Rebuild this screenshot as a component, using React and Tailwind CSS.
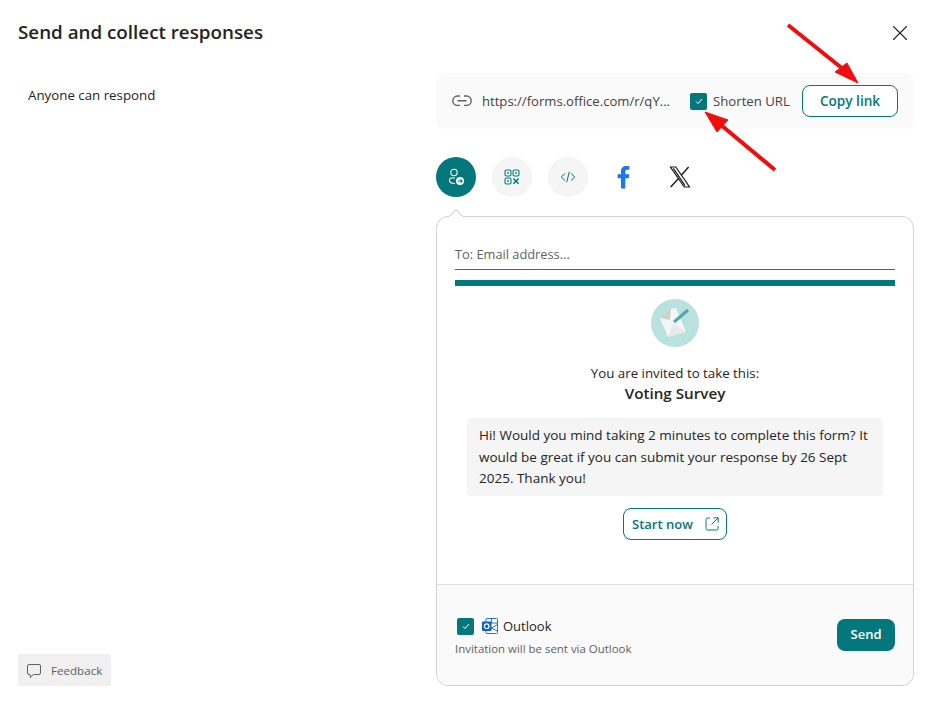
import React from "react";
import { X } from "lucide-react";

const Check = () => (
    <svg width="10" height="10" viewBox="0 0 10 10" fill="none" stroke="white" strokeWidth="1">
        <path d="M2 5.5 L4 7.5 L8 3" />
    </svg>
);

const CheckBox = () => (
    <span className="flex h-[17px] w-[17px] shrink-0 items-center justify-center rounded-[2px] bg-[#03787c]">
        <Check />
    </span>
);

const LinkIcon = () => (
    <svg width="20" height="12" viewBox="0 0 20 12" fill="none" stroke="#616161" strokeWidth="1.4">
        <path d="M8 1 H5.5 A4.7 4.7 0 0 0 5.5 10.4 H8 M12 1 H14.5 A4.7 4.7 0 0 1 14.5 10.4 H12 M5.5 5.7 H14.5" />
    </svg>
);

const ShareIcon = () => (
    <svg width="20" height="20" viewBox="0 0 20 20" fill="none" stroke="white" strokeWidth="1.1">
        <circle cx="8" cy="5.5" r="3.2" />
        <path d="M9 11 H5.5 A2.3 2.3 0 0 0 3.5 13.5 C3.5 15 5 16.5 9 16.5" />
        <circle cx="14" cy="14" r="4" fill="white" stroke="none" />
        <path d="M11.8 14 H16 M14.5 12.3 L16.2 14 L14.5 15.7" stroke="#03787c" />
    </svg>
);

const QrIcon = () => (
    <svg width="16" height="16" viewBox="0 0 16 16" fill="none" stroke="#03787c" strokeWidth="1.1">
        <rect x="1" y="1" width="6" height="6" rx="1.5" />
        <rect x="9" y="1" width="6" height="6" rx="1.5" />
        <rect x="1" y="9" width="6" height="6" rx="1.5" />
        <rect x="3.2" y="3.2" width="1.6" height="1.6" fill="#03787c" stroke="none" />
        <rect x="11.2" y="3.2" width="1.6" height="1.6" fill="#03787c" stroke="none" />
        <rect x="3.2" y="11.2" width="1.6" height="1.6" fill="#03787c" stroke="none" />
        <path d="M9.4 9.4 L14.6 14.8 M14.6 9.4 L9.4 14.8" strokeWidth="1.5" />
    </svg>
);

const CodeIcon = () => (
    <svg width="16" height="16" viewBox="0 0 16 16" fill="none" stroke="#03787c" strokeWidth="1">
        <path d="M5 4.5 L1.2 8 L5 11.5 M11 4.5 L14.8 8 L11 11.5 M9.3 2.8 L6.7 13.2" />
    </svg>
);

const FacebookIcon = () => (
    <svg width="14" height="24" viewBox="0 0 14 24">
        <path fill="#1877f2" d="M4 23.5 V13.2 H0.6 V9.2 H4 V6.4 C4 2.9 6.1 1 9.2 1 C10.7 1 12 1.1 12.4 1.2 V4.8 H10.3 C8.6 4.8 8.3 5.6 8.3 6.8 V9.2 H12.3 L11.8 13.2 H8.3 V23.5 Z" />
    </svg>
);

const XLogo = () => (
    <svg width="22" height="22" viewBox="0 0 22 22" fill="none" stroke="#1a1a1a">
        <path strokeWidth="1.2" d="M1.5 1 H6.8 L20.5 21 H15.2 Z" />
        <path strokeWidth="1.2" d="M4.4 2.4 L16 19.6" />
        <path strokeWidth="1.4" d="M19.6 1 L12.3 9.3 M9.6 12.4 L1.6 21" />
    </svg>
);

const FormLogo = () => (
    <svg width="48" height="48" viewBox="0 0 48 48">
        <circle cx="24" cy="24" r="24" fill="#b9e1e0" />
        <path fill="#f6f6f6" d="M9 19 L20 10 L25 9 L35 33 L17 38 Z" />
        <path fill="#cfcfcf" d="M9 19 L20 10 L19 21 Z" />
        <path fill="#e9e9e9" d="M17 38 L22 24 L35 33 Z" />
        <path d="M23 23 L37 11" stroke="#4fa9ac" strokeWidth="3" />
    </svg>
);

const OutlookIcon = () => (
    <svg width="16" height="16" viewBox="0 0 16 16">
        <rect x="4" y="0.5" width="11.5" height="15" rx="1" fill="white" stroke="#1a73e0" />
        <path d="M4 5 H15.5 M9.5 0.5 V5" stroke="#1a73e0" />
        <path d="M7 9 L15.5 13 M15.5 6.5 L8 11" stroke="#1a73e0" fill="none" />
        <rect x="0" y="3.5" width="9.5" height="9.5" rx="1" fill="#0f62c9" />
        <circle cx="4.7" cy="8.2" r="2.3" fill="none" stroke="white" strokeWidth="1.2" />
    </svg>
);

const OpenIcon = () => (
    <svg width="14" height="14" viewBox="0 0 14 14" fill="none" stroke="#03787c" strokeWidth="1">
        <path d="M5 1 H2.5 A1.5 1.5 0 0 0 1 2.5 V11.5 A1.5 1.5 0 0 0 2.5 13 H11.5 A1.5 1.5 0 0 0 13 11.5 V9" />
        <path d="M8.5 0.8 H13.2 V5.5 M13 1 L6.5 7.5" />
    </svg>
);

const FeedbackIcon = () => (
    <svg width="16" height="16" viewBox="0 0 16 16" fill="none" stroke="#616161" strokeWidth="1">
        <path d="M3 1.5 H13 A1.5 1.5 0 0 1 14.5 3 V10 A1.5 1.5 0 0 1 13 11.5 H7.5 L4.2 14.5 V11.5 H3 A1.5 1.5 0 0 1 1.5 10 V3 A1.5 1.5 0 0 1 3 1.5 Z" />
    </svg>
);

// red annotation arrows drawn over the screenshot
const Arrows = () => (
    <svg className="absolute left-0 top-0 pointer-events-none" width="931" height="701" viewBox="0 0 931 701">
        <g fill="#f20d0d">
            <path d="M788 25 L843 69" stroke="#f20d0d" strokeWidth="4" fill="none" />
            <path d="M858 83 L835 72 L847 63 Z" stroke="#f20d0d" />
            <path d="M775 170 L721 125" stroke="#f20d0d" strokeWidth="4" fill="none" />
            <path d="M705 112 L728 120 L717 132 Z" stroke="#f20d0d" />
        </g>
    </svg>
);

const App = () => {
    return (
        <div className="relative flex h-[701px] w-[931px] flex-col overflow-hidden bg-white font-['Open_Sans',sans-serif] text-[#242424]">
            <div className="flex h-[73px] items-start justify-between pl-[18px] pr-[18px] pt-[18px]">
                <h1 className="text-[18.8px] leading-7 font-semibold">Send and collect responses</h1>
                <X className="mt-0.5" size={26} strokeWidth={1} />
            </div>

            <div className="flex h-[613px]">
                <div className="flex w-[436px] flex-col justify-between pl-[18px]">
                    <div className="pl-2.5 pt-[12px] text-[13.3px] leading-5">Anyone can respond</div>
                    <button className="flex h-8 w-[93px] items-center gap-[9px] rounded-[2px] bg-[#f0f0f0] pl-2 pt-0.5 text-[11.6px] text-[#616161]">
                        <FeedbackIcon />
                        Feedback
                    </button>
                </div>

                <div className="flex w-[478px] flex-col">
                    <div className="flex h-14 items-center rounded-lg bg-[#fafafa] pl-4 pr-4">
                        <LinkIcon />
                        <span className="ml-2.5 w-[208px] pt-0.5 text-[13.1px] text-[#424242]">https://forms.office.com/r/qY...</span>
                        <CheckBox />
                        <span className="ml-1.5 w-[89px] pt-0.5 text-[13.2px] text-[#424242]">Shorten URL</span>
                        <button className="h-8 w-24 rounded-lg border border-[#03787c] bg-white text-[13.6px] font-semibold text-[#03787c]">Copy link</button>
                    </div>

                    <div className="mt-7 flex gap-4">
                        <div className="flex h-10 w-10 items-center justify-center rounded-full bg-[#03787c]"><ShareIcon /></div>
                        <div className="flex h-10 w-10 items-center justify-center rounded-full bg-[#f5f5f5]"><QrIcon /></div>
                        <div className="flex h-10 w-10 items-center justify-center rounded-full bg-[#f5f5f5]"><CodeIcon /></div>
                        <div className="flex h-10 w-10 items-center justify-center"><FacebookIcon /></div>
                        <div className="flex h-10 w-10 items-center justify-center"><XLogo /></div>
                    </div>

                    <div className="relative mt-[19px] flex flex-1 flex-col rounded-xl border border-[#d1d1d1]">
                        <div className="absolute -top-[6px] left-[14px] h-[10px] w-[10px] rotate-45 border-l border-t border-[#d1d1d1] bg-white" />
                        <div className="flex-1 px-[18px] pt-[22px]">
                            <div className="h-[31px] border-b border-[#616161] text-[12.8px] leading-[30px] text-[#616161]">To: Email address...</div>
                            <div className="mt-[10px] h-1.5 bg-[#03787c]" />
                            <div className="mt-[13px] flex justify-center"><FormLogo /></div>
                            <p className="mt-4 text-center text-[13.3px] leading-5">You are invited to take this:</p>
                            <p className="text-center text-[15.2px] leading-5 font-semibold">Voting Survey</p>
                            <div className="mx-3 mt-[15px] h-[78px] rounded bg-[#f5f5f5] px-3 pt-[7px] text-[13.5px] leading-[21.5px]">
                                Hi! Would you mind taking 2 minutes to complete this form? It would be great if you can submit your response by 26 Sept 2025. Thank you!
                            </div>
                            <div className="mt-3 flex justify-center">
                                <button className="flex h-8 w-[104px] items-center justify-between rounded-lg border border-[#03787c] pl-2 pr-[7px] text-[13px] font-semibold text-[#03787c]">
                                    <span className="pt-0.5">Start now</span>
                                    <OpenIcon />
                                </button>
                            </div>
                        </div>

                        <div className="flex h-[101px] items-center justify-between rounded-b-xl border-t border-[#e0e0e0] bg-[#fafafa] px-[18px]">
                            <div className="pt-[3px]">
                                <div className="flex items-center pl-0.5">
                                    <CheckBox />
                                    <span className="ml-2"><OutlookIcon /></span>
                                    <span className="ml-[5px] text-[13px] leading-5">Outlook</span>
                                </div>
                                <p className="mt-[5px] text-[11.45px] leading-4 text-[#616161]">Invitation will be sent via Outlook</p>
                            </div>
                            <button className="h-8 w-[58px] rounded-lg bg-[#03787c] text-[13px] font-semibold text-white">Send</button>
                        </div>
                    </div>
                </div>
            </div>
            <Arrows />
        </div>
    );
};

export default App;
